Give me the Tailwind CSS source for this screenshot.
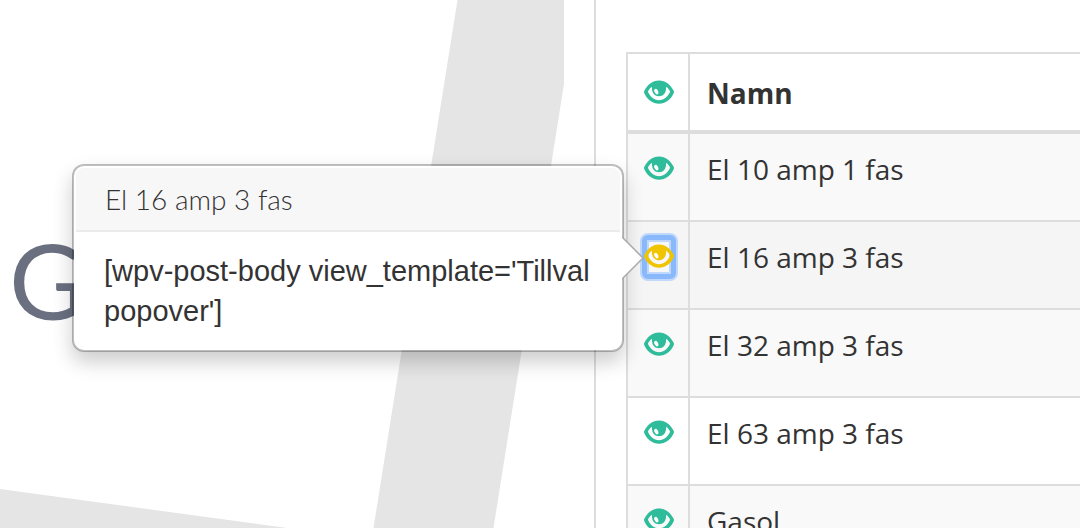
<!DOCTYPE html>
<html lang="sv">
<head>
    <meta charset="UTF-8">
    <meta name="viewport" content="width=device-width, initial-scale=1.0">
    <title>Tillval</title>
    <script src="https://cdn.jsdelivr.net/npm/@tailwindcss/browser@4"></script>
</head>
<body class="flex h-screen overflow-hidden bg-white font-['Open_Sans',sans-serif] text-[28px] leading-10 text-[#333]">
    <!-- Eye icon, shared by all rows -->
    <svg class="hidden">
        <symbol id="eye" viewBox="0 0 30 24">
            <path fill="currentColor" fill-rule="evenodd" d="M.2 11C3 5 8.500 .4 15 .4S27 5 29.800 11Q30.100 12 29.800 13C27 19.500 21.500 23.700 15 23.700S3 19.500 .2 13Q-.1 12 .2 11ZM7.900 6.800C6 8 4.700 9.800 3.900 11.700C6 16.500 10 20.200 15 20.200S24 16.500 26.100 11.700C25.300 9.800 24 8 22.100 6.800C22.500 12.500 19.500 16.300 15 16.300S7.500 12.500 7.900 6.800Z"/>
            <ellipse cx="12.300" cy="11.600" rx="1.800" ry="3" transform="rotate(-25 12.300 11.600)" fill="#fff"/>
        </symbol>
    </svg>

    <!-- Floor map -->
    <div class="w-[55%] shrink-0 overflow-hidden">
        <svg class="h-full w-full" role="img" aria-label="Karta">
            <polygon points="457.500,0 564,0 564,84 493.500,528 373.500,528" fill="#e5e5e5"/>
            <polygon points="0,489 287,528 0,528" fill="#e5e5e5"/>
            <text x="9" y="320" font-family="Lato, sans-serif" font-size="104" fill="#6b7080">G</text>
        </svg>
    </div>

    <!-- Options table -->
    <main class="min-w-0 flex-1 border-l-2 border-[#ddd] pt-[52px] pl-[30px]">
        <table class="w-full border-separate border-spacing-0 border-t-2 border-l-2 border-[#ddd]">
            <thead>
                <tr>
                    <th class="w-[62px] border-r-2 border-b-4 border-[#ddd] pt-5 pr-3.5 pb-4 pl-4">
                        <button type="button" aria-label="Visa" class="flex h-10 w-[30px] items-center pb-1 text-[#2fbc9b]"><svg class="h-6 w-[30px]"><use href="#eye"/></svg></button>
                    </th>
                    <th class="border-b-4 border-[#ddd] px-[17px] pt-[19px] pb-[17px] text-left font-bold">Namn</th>
                </tr>
            </thead>
            <tbody>
                <tr class="h-[88px] bg-[#f9f9f9] align-top">
                    <td class="border-r-2 border-b-2 border-[#ddd] py-4 pr-3.5 pl-4">
                        <button type="button" aria-label="Visa El 10 amp 1 fas" class="flex h-10 w-[30px] items-center pb-1 text-[#2fbc9b]"><svg class="h-6 w-[30px]"><use href="#eye"/></svg></button>
                    </td>
                    <td class="border-b-2 border-[#ddd] px-[17px] pt-[15px]">El 10 amp 1 fas</td>
                </tr>
                <tr class="h-[88px] bg-[#f5f5f5] align-top">
                    <td class="border-r-2 border-b-2 border-[#ddd] py-4 pr-3.5 pl-4">
                        <div class="relative w-[30px]">
                            <button type="button" aria-label="Visa El 16 amp 3 fas" aria-describedby="popover" class="relative flex h-10 w-[30px] items-center pb-1 text-[#f0c400]">
                                <span class="absolute -inset-x-1 -top-[5px] -bottom-[3px] rounded-lg border-2 border-[#bfd8fb] bg-[#89b9fb] p-[5px]"><span class="block h-full border-2 border-[#bfd8fb] bg-[#f7f7f7]"></span></span>
                                <svg class="relative h-6 w-[30px]"><use href="#eye"/></svg>
                            </button>
                            <div id="popover" role="tooltip" class="absolute top-1/2 right-full mr-5 w-[552px] -translate-y-1/2 rounded-xl border-2 border-black/25 bg-white bg-clip-padding shadow-[0_10px_20px_rgba(0,0,0,0.2)]">
                                <h3 class="mx-0.5 mt-0.5 rounded-t-lg border-b-2 border-[#ebebeb] bg-[#f7f7f7] px-[29px] py-[11px] font-['Lato',sans-serif] leading-10 font-light">El 16 amp 3 fas</h3>
                                <div class="px-[30px] py-[19px] font-['Liberation_Sans',sans-serif] text-[29px] leading-10">[wpv-post-body view_template='Tillval popover']</div>
                                <svg class="absolute top-1/2 -right-[22px] h-11 w-[22px] -translate-y-1/2" viewBox="0 0 22 44">
                                    <polygon points="0,1 21,22 0,43" fill="#fff"/>
                                    <path d="M0 1L21 22L0 43" fill="none" stroke="#aaa" stroke-width="1.500"/>
                                </svg>
                            </div>
                        </div>
                    </td>
                    <td class="border-b-2 border-[#ddd] px-[17px] pt-[15px]">El 16 amp 3 fas</td>
                </tr>
                <tr class="h-[88px] bg-[#f9f9f9] align-top">
                    <td class="border-r-2 border-b-2 border-[#ddd] py-4 pr-3.5 pl-4">
                        <button type="button" aria-label="Visa El 32 amp 3 fas" class="flex h-10 w-[30px] items-center pb-1 text-[#2fbc9b]"><svg class="h-6 w-[30px]"><use href="#eye"/></svg></button>
                    </td>
                    <td class="border-b-2 border-[#ddd] px-[17px] pt-[15px]">El 32 amp 3 fas</td>
                </tr>
                <tr class="h-[88px] align-top">
                    <td class="border-r-2 border-b-2 border-[#ddd] py-4 pr-3.5 pl-4">
                        <button type="button" aria-label="Visa El 63 amp 3 fas" class="flex h-10 w-[30px] items-center pb-1 text-[#2fbc9b]"><svg class="h-6 w-[30px]"><use href="#eye"/></svg></button>
                    </td>
                    <td class="border-b-2 border-[#ddd] px-[17px] pt-[15px]">El 63 amp 3 fas</td>
                </tr>
                <tr class="h-[88px] bg-[#f9f9f9] align-top">
                    <td class="border-r-2 border-b-2 border-[#ddd] py-4 pr-3.5 pl-4">
                        <button type="button" aria-label="Visa Gasol" class="flex h-10 w-[30px] items-center pb-1 text-[#2fbc9b]"><svg class="h-6 w-[30px]"><use href="#eye"/></svg></button>
                    </td>
                    <td class="border-b-2 border-[#ddd] px-[17px] pt-[15px]">Gasol</td>
                </tr>
            </tbody>
        </table>
    </main>
</body>
</html>
